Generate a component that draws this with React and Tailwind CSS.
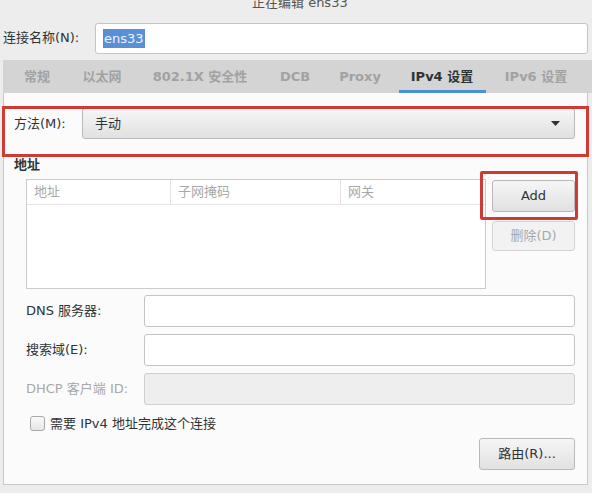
import React from "react";

const font = { fontFamily: '"DejaVu Sans", "Noto Sans CJK SC", sans-serif' };

const tabs = [
  { name: "常规", w: "w-[58px]" },
  { name: "以太网", w: "w-[72px]" },
  { name: "802.1X 安全性", w: "w-[124px]" },
  { name: "DCB", w: "w-[66px]" },
  { name: "Proxy", w: "w-[64px]" },
  { name: "IPv4 设置", w: "w-[100px]", active: true },
  { name: "IPv6 设置", w: "w-[88px]" },
];

const Field = ({ label, disabled }) => (
  <div className="flex items-center">
    <div
      className={`w-[118px] text-[13px] ${
        disabled ? "text-[#a8a8a8]" : "text-[#2e3436]"
      }`}
    >
      {label}
    </div>
    <div
      className={`flex-1 h-[32px] rounded-[3px] border ${
        disabled
          ? "bg-[#eeeeee] border-[#cfcfcf]"
          : "bg-white border-[#c4c4c4]"
      }`}
    />
  </div>
);

export default function App() {
  return (
    <div
      className="relative w-[592px] h-[493px] overflow-hidden bg-[#ededed] text-[#2e3436]"
      style={font}
    >
      {/* Title, clipped at the top */}
      <div className="h-[22px] overflow-hidden">
        <div className="-mt-[7px] pl-[252px] text-[13px] text-[#555]">
          正在编辑 ens33
        </div>
      </div>

      {/* Connection name */}
      <div className="flex items-center h-[32px] pl-[3px] pr-[4px]">
        <div className="w-[92px] text-[13px]">连接名称(N):</div>
        <div className="flex-1 h-[31px] bg-white border border-[#c4c4c4] rounded-[3px] flex items-center pl-[7px]">
          <span className="bg-[#5a8fd3] text-[#eef4ff] text-[13px] leading-[19px] px-[1px]">
            ens33
          </span>
        </div>
      </div>

      {/* Tabs */}
      <div className="mt-[6px] ml-[3px] h-[33px] bg-[#d4d4d4] flex pl-[5px]">
        {tabs.map((t) => (
          <div
            key={t.name}
            className={`relative ${t.w} flex items-center justify-center text-[13px] font-bold`}
          >
            <span className={t.active ? "text-[#2e3436]" : "text-[#a2a2a2]"}>
              {t.name}
            </span>
            {t.active && (
              <div className="absolute left-[7px] right-[6px] bottom-0 h-[3px] bg-[#4a90d9]" />
            )}
          </div>
        ))}
      </div>

      {/* Content panel */}
      <div className="ml-[3px] w-[585px] h-[392px] bg-[#fbfbfb] border-l border-r border-b border-[#c8c8c8] pt-[15px] pl-[10px] pr-[12px]">
        {/* Method */}
        <div className="flex items-center">
          <div className="w-[68px] text-[13px]">方法(M):</div>
          <div className="flex-1 h-[31px] rounded-[3px] border border-[#b9b9b9] bg-gradient-to-b from-[#f6f6f6] to-[#e1e1e1] flex items-center pl-[12px] pr-[14px]">
            <span className="flex-1 text-[13px]">手动</span>
            <svg width="9" height="5" viewBox="0 0 9 5">
              <path d="M0 0h9L4.5 5z" fill="#2e3436" />
            </svg>
          </div>
        </div>

        {/* Address */}
        <div className="mt-[18px] text-[13px] font-bold leading-[16px]">地址</div>
        <div className="mt-[6px] pl-[12px] flex gap-[6px]">
          <div className="w-[460px] h-[110px] bg-white border border-[#cbcbcb]">
            <div className="flex h-[25px] border-b border-[#e6e6e6] text-[13px] text-[#a8a8a8]">
              <div className="w-[144px] pl-[7px] flex items-center border-r border-[#e3e3e3]">
                地址
              </div>
              <div className="w-[170px] pl-[7px] flex items-center border-r border-[#e3e3e3]">
                子网掩码
              </div>
              <div className="flex-1 pl-[7px] flex items-center">网关</div>
            </div>
          </div>
          <div className="flex-1 flex flex-col gap-[9px] pt-[1px]">
            <div className="h-[32px] rounded-[3px] border border-[#b9b9b9] bg-gradient-to-b from-[#f6f6f6] to-[#e1e1e1] flex items-center justify-center text-[13px]">
              Add
            </div>
            <div className="h-[30px] rounded-[3px] border border-[#d4d4d4] bg-[#f2f2f2] flex items-center justify-center text-[13px] text-[#a8a8a8]">
              删除(D)
            </div>
          </div>
        </div>

        {/* DNS etc */}
        <div className="mt-[6px] pl-[12px] flex flex-col gap-[7px]">
          <Field label="DNS 服务器:" />
          <Field label="搜索域(E):" />
          <Field label="DHCP 客户端 ID:" disabled />
        </div>

        <div className="mt-[9px] pl-[16px] flex items-center gap-[5px]">
          <div className="w-[15px] h-[15px] rounded-[3px] border border-[#a8a8a8] bg-gradient-to-b from-[#fafafa] to-[#e6e6e6]" />
          <span className="text-[13px]">需要 IPv4 地址完成这个连接</span>
        </div>

        <div className="mt-[4px] flex justify-end">
          <div className="w-[96px] h-[32px] rounded-[3px] border border-[#b9b9b9] bg-gradient-to-b from-[#f6f6f6] to-[#e1e1e1] flex items-center justify-center text-[13px]">
            路由(R)...
          </div>
        </div>
      </div>

      {/* Red annotation boxes */}
      <div className="absolute left-[2px] top-[106px] w-[587px] h-[51px] border-[3px] border-[#cf3a33]" />
      <div className="absolute left-[480px] top-[171px] w-[98px] h-[49px] border-[3px] border-[#cf3a33] rounded-[2px]" />
    </div>
  );
}
